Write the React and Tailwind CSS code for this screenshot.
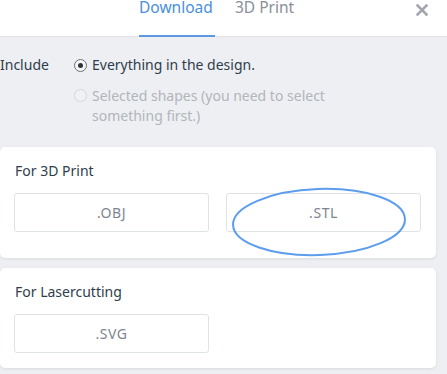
export default function App() {
    const font = { fontFamily: '"Noto Sans", "Open Sans", sans-serif' };

    return (
        <div
            className="relative h-[374px] w-[447px] overflow-hidden bg-[#eeeff3] text-[#2f3d4c]"
            style={font}
        >
            {/* Tabs header */}
            <div className="relative h-[37px] border-b border-[#e1e3e8] bg-white">
                <div className="flex pl-[139px]">
                    <div className="relative h-[36px] w-[76px]">
                        <span className="-mt-[3px] block text-[15.5px] leading-[20px] text-[#4a8fe0]">Download</span>
                        <div className="absolute bottom-[-1px] left-0 h-[2px] w-full bg-[#5b98e0]" />
                    </div>
                    <span className="-mt-[3px] ml-[20px] block text-[15.5px] leading-[20px] text-[#8a9099]">3D Print</span>
                </div>
                <svg className="absolute left-[416px] top-[4px] h-[12px] w-[12px]" viewBox="0 0 12 12">
                    <path d="M1.5 1.5 L10.5 10.5 M10.5 1.5 L1.5 10.5" stroke="#a3a7ad" strokeWidth="2.6" strokeLinecap="square" />
                </svg>
            </div>

            {/* Include options */}
            <div className="flex pt-[18px] text-[14px] leading-[20px]">
                <span className="w-[74px]">Include</span>
                <div className="flex flex-col">
                    <div className="flex items-center gap-[5px]">
                        <span className="flex h-[13px] w-[13px] items-center justify-center rounded-full border border-[#6b7077] bg-[#f4f5f7]">
                            <span className="h-[5px] w-[5px] rounded-full bg-[#2f3338]" />
                        </span>
                        <span>Everything in the design.</span>
                    </div>
                    <div className="mt-[11px] flex items-start gap-[5px] text-[#b2b5ba]">
                        <span className="mt-[3px] h-[13px] w-[13px] shrink-0 rounded-full border border-[#d3d5d9] bg-[#f1f2f4]" />
                        <span className="w-[245px]">Selected shapes (you need to select something first.)</span>
                    </div>
                </div>
            </div>

            {/* For 3D Print */}
            <div className="mt-[21px] w-[436px] rounded-[5px] bg-white px-[14px] pt-[14px] pb-[26px] shadow-[0_1px_3px_rgba(60,70,90,0.12)]">
                <div className="pl-[1px] text-[14px] leading-[20px]">For 3D Print</div>
                <div className="mt-[12px] flex gap-[17px]">
                    <button className="h-[39px] w-[195px] rounded-[3px] border border-[#dfe2e6] text-[14px] tracking-[0.04em] text-[#7d8590]">.OBJ</button>
                    <button className="h-[39px] w-[195px] rounded-[3px] border border-[#dfe2e6] text-[14px] tracking-[0.04em] text-[#7d8590]">.STL</button>
                </div>
            </div>

            {/* For Lasercutting */}
            <div className="mt-[10px] w-[436px] rounded-[5px] bg-white px-[14px] pt-[14px] pb-[15px] shadow-[0_1px_3px_rgba(60,70,90,0.12)]">
                <div className="pl-[1px] text-[14px] leading-[20px]">For Lasercutting</div>
                <div className="mt-[12px] flex">
                    <button className="h-[39px] w-[195px] rounded-[3px] border border-[#dfe2e6] text-[14px] tracking-[0.04em] text-[#7d8590]">.SVG</button>
                </div>
            </div>

            {/* Highlight ellipse annotation */}
            <svg className="pointer-events-none absolute left-[226px] top-[184px] h-[76px] w-[186px]" viewBox="0 0 186 76">
                <ellipse cx="93" cy="38" rx="86" ry="33" fill="none" stroke="#5c9ded" strokeWidth="2" transform="rotate(-2 93 38)" />
            </svg>
        </div>
    );
}
